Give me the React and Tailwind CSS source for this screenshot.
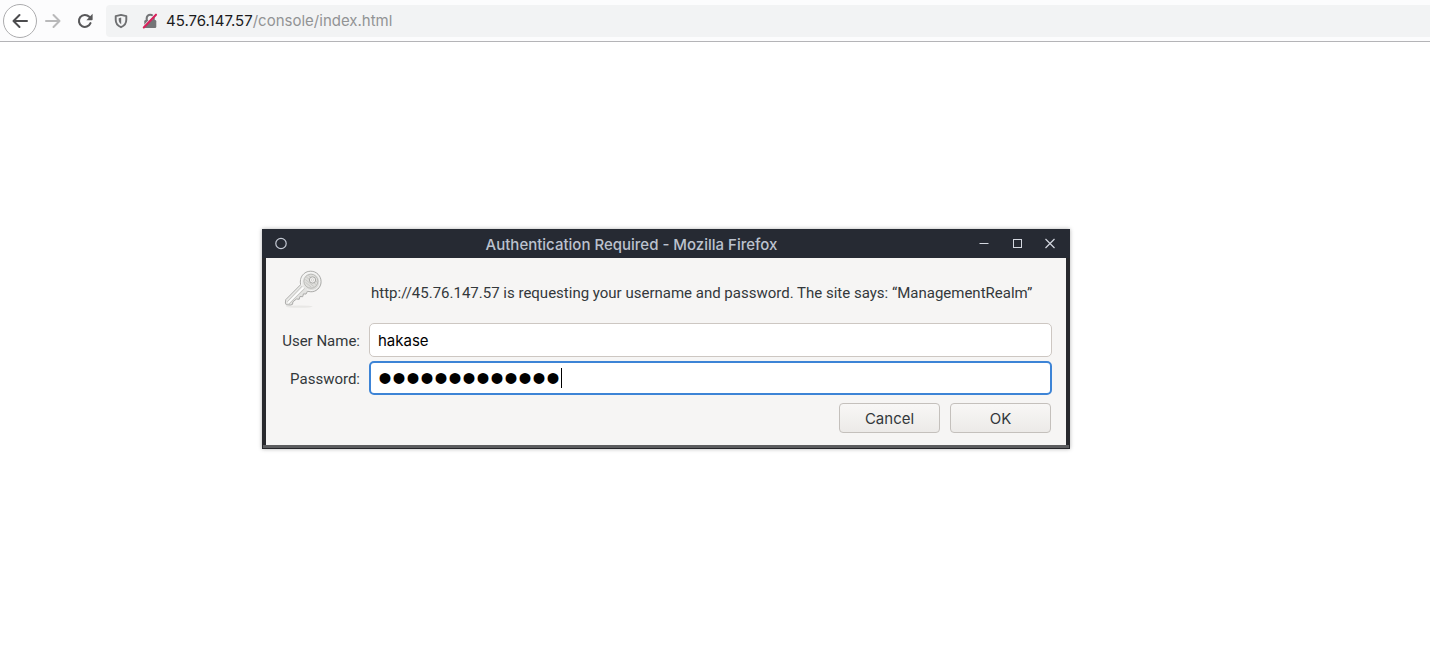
import React from "react";

const iconButton = "flex items-center justify-center shrink-0";

function BackIcon() {
  return (
    <svg width="18" height="18" viewBox="0 0 18 18" fill="none" stroke="#4c4c4e" strokeWidth="2" strokeLinecap="round" strokeLinejoin="round">
      <path d="M16 9H2.5M8.5 3L2.5 9l6 6" />
    </svg>
  );
}

function ForwardIcon() {
  return (
    <svg width="18" height="18" viewBox="0 0 18 18" fill="none" stroke="#b9b9ba" strokeWidth="2" strokeLinecap="round" strokeLinejoin="round">
      <path d="M2 9h13.5M9.5 3l6 6-6 6" />
    </svg>
  );
}

function ReloadIcon() {
  return (
    <svg width="18" height="18" viewBox="0 0 18 18" fill="none">
      <path d="M14.5 11.2A6 6 0 1 1 13.3 4.8L14.5 6" stroke="#58585a" strokeWidth="2.1" strokeLinecap="round" />
      <path d="M16.6 1.8v5.6c0 .5-.3.8-.8.8h-5.4z" fill="#58585a" />
    </svg>
  );
}

function ShieldIcon() {
  return (
    <svg width="14" height="16" viewBox="0 0 14 16" fill="none">
      <path d="M7 1.9L12.3 3.1v3.7c0 3.6-2.100 6.1-5.3 7.4C3.800 12.900 1.700 10.400 1.700 6.800V3.100z" stroke="#6e6f71" strokeWidth="1.900" strokeLinejoin="round" />
      <path d="M7.200 4.600v6.600C5.500 10.100 4.700 8.600 4.700 6.600V5.200z" fill="#6e6f71" />
    </svg>
  );
}

function InsecureIcon() {
  return (
    <svg width="16" height="16" viewBox="0 0 16 16" fill="none">
      <path d="M4.700 7.500V5.200a3.500 3.500 0 0 1 7 0v2.300" stroke="#747577" strokeWidth="2.100" />
      <rect x="2.300" y="7" width="12" height="8" rx="1.300" fill="#747577" />
      <path d="M0.800 14.300L13.300 0.900" stroke="#f2f3f4" strokeWidth="1.500" />
      <path d="M1.800 14.400L14 1.700" stroke="#d8215c" strokeWidth="2.100" strokeLinecap="round" />
    </svg>
  );
}

function KeyIcon() {
  return (
    <svg width="40" height="40" viewBox="0 0 42 42" fill="none">
      <defs>
        <linearGradient id="metal" x1="10" y1="10" x2="32" y2="32" gradientUnits="userSpaceOnUse">
          <stop stopColor="#fbfbfa" />
          <stop offset="1" stopColor="#d2d2cf" />
        </linearGradient>
      </defs>
      <ellipse cx="17" cy="39.500" rx="14" ry="1.200" fill="#e8e7e5" />
      <path
        d="M18.500 16.500C16.800 8.800 22 2.300 29 2.300c6.300 0 11 5 11 11 0 6.500-5.500 11-11 10.600l-3.300-.5-1.500 2.900-2.700-.2-.8 3-2.900-.2-.8 2.900-2.900-.3-3.700 3-.4 2.600-2 .7-4.500-.2-1-1.900.4-3.500z"
        fill="url(#metal)"
        stroke="#a8a8a5"
        strokeLinejoin="round"
      />
      <path d="M19.700 17.200C18 9.500 23 3.700 29 3.700c5.500 0 9.600 4.300 9.600 9.600 0 5.700-4.700 9.700-9.600 9.300l-4-.8" stroke="#f7f7f5" />
      <circle cx="29.300" cy="12.800" r="7.400" fill="#dfdfdc" stroke="#b6b6b3" />
      <path d="M23.500 11l9 7.500M24.500 8.500l10.500 8M26.500 6.700l9.200 7M23.600 14l6 5" stroke="#bcbcb9" strokeWidth=".7" />
      <circle cx="31" cy="11.500" r="3.300" fill="#f4f3f2" stroke="#a3a3a0" />
      <circle cx="31" cy="11.500" r="1.300" fill="#f6f5f4" stroke="#c6c6c3" strokeWidth=".7" />
      <path d="M20 18L4.500 34.300M22.800 20.500L6 37.200" stroke="#c2c2bf" />
      <path d="M21.500 19.300L5.500 35.500" stroke="#fff" strokeWidth="1.500" />
    </svg>
  );
}

function Toolbar() {
  return (
    <header className="flex h-[42px] items-center border-b border-[#b4b4b7] bg-[#fcfcfd] pl-[3px]">
      <button type="button" aria-label="Back" className={`${iconButton} size-[34px] rounded-full border border-[#acacae] bg-white`}>
        <BackIcon />
      </button>
      <button type="button" aria-label="Forward" className={`${iconButton} h-8 w-8`}>
        <ForwardIcon />
      </button>
      <button type="button" aria-label="Reload" className={`${iconButton} h-8 w-8`}>
        <ReloadIcon />
      </button>
      <div className="ml-[5px] flex h-8 min-w-0 flex-1 items-center rounded-l bg-[#f2f3f4] pl-2">
        <button type="button" aria-label="Tracking protection" className={iconButton}>
          <ShieldIcon />
        </button>
        <button type="button" aria-label="Connection is not secure" className={`${iconButton} ml-3.5`}>
          <InsecureIcon />
        </button>
        <a href="#address" className="ml-2 truncate text-[15px] leading-6 text-[#929395]">
          <span className="text-[#1b1b1d]">45.76.147.57</span>/console/index.html
        </a>
      </div>
    </header>
  );
}

function TitleBar() {
  return (
    <div className="flex h-[29px] items-center bg-[#262a33] pr-3 pl-2">
      <svg width="14" height="14" viewBox="0 0 14 14" className="ml-1 shrink-0" fill="none" stroke="#c5cad5" strokeWidth="1.200">
        <circle cx="7" cy="6.500" r="5.200" />
      </svg>
      <h1 className="flex-1 pt-0.5 pr-px text-center text-[15px] leading-5 font-medium text-[#bcc2ce]">Authentication Required - Mozilla Firefox</h1>
      <div className="flex gap-[17px] text-[#d3d7df]">
        <button type="button" aria-label="Minimize" className={iconButton}>
          <svg width="16" height="16" viewBox="0 0 16 16" stroke="currentColor">
            <path d="M3.500 7.500h9" />
          </svg>
        </button>
        <button type="button" aria-label="Maximize" className={iconButton}>
          <svg width="16" height="16" viewBox="0 0 16 16" fill="none" stroke="currentColor">
            <rect x="4.500" y="3.500" width="8" height="8" />
          </svg>
        </button>
        <button type="button" aria-label="Close" className={iconButton}>
          <svg width="16" height="16" viewBox="0 0 16 16" stroke="currentColor" strokeWidth="1.200">
            <path d="M3.500 3l9 9M12.500 3l-9 9" />
          </svg>
        </button>
      </div>
    </div>
  );
}

const label = "pt-0.5 text-right font-['Roboto',sans-serif] whitespace-nowrap";

const dialogButton =
  "h-[30px] w-[101px] rounded border border-[#c4c0bc] bg-linear-to-b from-[#f8f7f6] to-[#eceae8] pt-0.5 text-[15px] leading-5 text-[#33383b]";

function AuthDialog() {
  return (
    <section
      role="dialog"
      aria-label="Authentication Required"
      className="w-full max-w-[808px] border-b border-[#242529] bg-[#28292d] text-[15px] leading-5 text-[#33383b] shadow-[0_0_4px_rgba(0,0,0,0.3)]"
    >
      <TitleBar />
      <form className="mx-1 bg-[#f6f5f4] px-[14px] pt-[9px] pb-3" onSubmit={(e) => e.preventDefault()}>
        <div className="grid grid-cols-[80px_minmax(0,1fr)] items-center gap-x-[9px] gap-y-1">
          <div className="h-[52px] pt-0.5 pl-[3px]">
            <KeyIcon />
          </div>
          <p className="pl-0.5 font-['Roboto',sans-serif]">
            http://45.76.147.57 is requesting your username and password. The site says: “ManagementRealm”
          </p>
          <label htmlFor="username" className={label}>
            User Name:
          </label>
          <input
            id="username"
            type="text"
            defaultValue="hakase"
            className="h-[34px] w-full rounded-[5px] border border-[#cdc7c2] bg-white px-2 text-black outline-none"
          />
          <label htmlFor="password" className={label}>
            Password:
          </label>
          <div className="relative">
            <input
              id="password"
              type="password"
              defaultValue="correcthorse1"
              className="block h-[34px] w-full rounded-[5px] border-2 border-[#3d84d6] bg-white px-[7px] font-['Liberation_Sans',sans-serif] text-[40px] leading-[30px] text-black outline-none"
            />
            <span className="absolute top-[7px] left-48 h-5 w-px bg-black" />
          </div>
        </div>
        <div className="mt-2 flex justify-end gap-[10px] pr-px">
          <button type="button" className={dialogButton}>
            Cancel
          </button>
          <button type="submit" className={dialogButton}>
            OK
          </button>
        </div>
      </form>
      <div className="mx-px h-[3px] bg-[#5c5d5f]" />
    </section>
  );
}

export default function App() {
  return (
    <div className="min-h-screen bg-white font-['Inter',sans-serif]">
      <Toolbar />
      <main className="pt-[187px] pl-[262px]">
        <AuthDialog />
      </main>
    </div>
  );
}
